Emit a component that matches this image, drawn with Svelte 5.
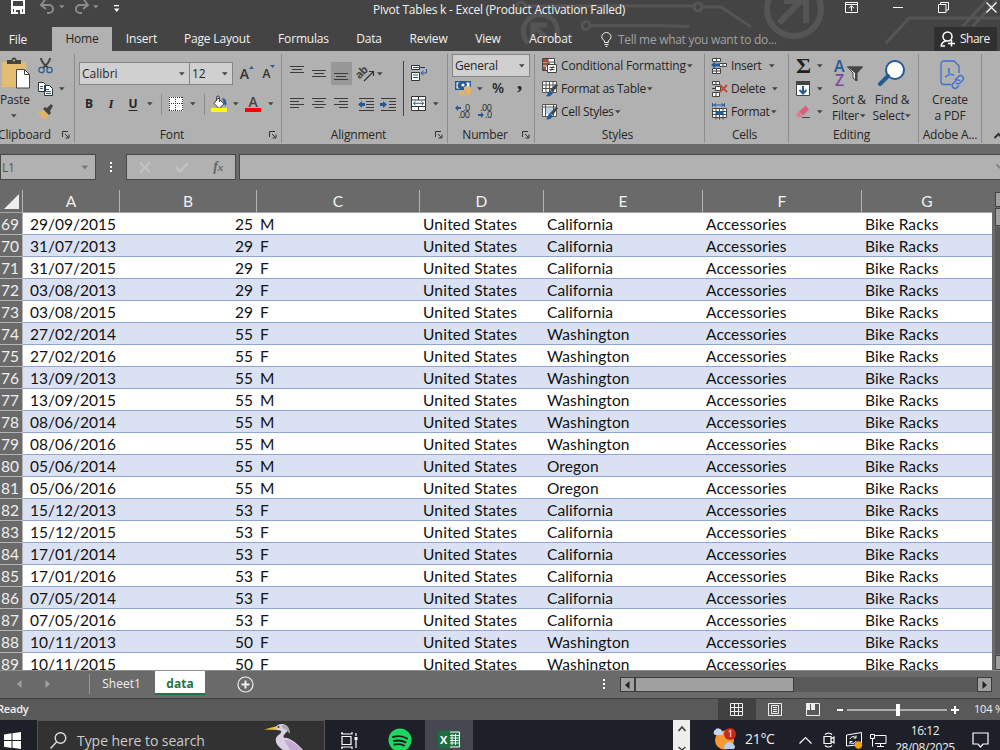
<script>
  const rows = [
    [69, '29/09/2015', 25, 'M', 'California'],
    [70, '31/07/2013', 29, 'F', 'California'],
    [71, '31/07/2015', 29, 'F', 'California'],
    [72, '03/08/2013', 29, 'F', 'California'],
    [73, '03/08/2015', 29, 'F', 'California'],
    [74, '27/02/2014', 55, 'F', 'Washington'],
    [75, '27/02/2016', 55, 'F', 'Washington'],
    [76, '13/09/2013', 55, 'M', 'Washington'],
    [77, '13/09/2015', 55, 'M', 'Washington'],
    [78, '08/06/2014', 55, 'M', 'Washington'],
    [79, '08/06/2016', 55, 'M', 'Washington'],
    [80, '05/06/2014', 55, 'M', 'Oregon'],
    [81, '05/06/2016', 55, 'M', 'Oregon'],
    [82, '15/12/2013', 53, 'F', 'California'],
    [83, '15/12/2015', 53, 'F', 'California'],
    [84, '17/01/2014', 53, 'F', 'California'],
    [85, '17/01/2016', 53, 'F', 'California'],
    [86, '07/05/2014', 53, 'F', 'California'],
    [87, '07/05/2016', 53, 'F', 'California'],
    [88, '10/11/2013', 50, 'F', 'Washington'],
    [89, '10/11/2015', 50, 'F', 'Washington']
  ];
  const columns = ['A', 'B', 'C', 'D', 'E', 'F', 'G'];
</script>

{#snippet caret()}<svg class="caret" width="6" height="4" viewBox="0 0 6 4"><path d="M0 .3h5.6L2.8 3.5z" fill="currentColor" /></svg>{/snippet}

{#snippet launcher()}<svg class="launcher" width="8" height="8" viewBox="0 0 8 8" fill="none" stroke="#333"><path d="M.5 6V.5H6M3 3l3.500 3.500M7 3.500V7H3.500" /></svg>{/snippet}

{#snippet lines(a, b)}<svg width="14" height="12" viewBox="0 0 14 12" stroke="#3b3b3b"><path d={a} /><path d={b} /></svg>{/snippet}

<div class="window">
  <header>
    <svg class="decor" width="1000" height="51" viewBox="0 0 1000 51" fill="none" stroke="#555" stroke-width="3">
      <path d="M528 43a17 17 0 1 1 27-3" stroke-width="5" /><path d="M548 40l-14-14M533 38V25h14" stroke-width="5" />
      <circle cx="586" cy="25.500" r="4" /><path d="M591 25.500h70l28 1" />
      <circle cx="521" cy="6" r="4" /><path d="M526 6h167M703 7h18l30 20" /><circle cx="698" cy="7" r="4" />
      <circle cx="794" cy="9" r="27" stroke-width="6" /><path d="M779 23l24-24M784 1h22v22" stroke-width="6" />
      <path d="M886 43l23-25h91M963 26l24-26M973 26l24-26" />
    </svg>
    <div class="titlebar">
      <div class="quick">
        <svg width="14" height="15" viewBox="0 0 14 15"><path d="M1 0h12v13H1z" fill="none" stroke="#fff" stroke-width="2" /><path d="M1 6h12v3H1zM3 9h8v5H3z" fill="#fff" /><path d="M5 10h4v4H7v-2H5z" fill="#444" /></svg>
        <svg width="15" height="14" viewBox="0 0 15 14" fill="none" stroke="#8b8b8b" stroke-width="2"><path d="M1 5h8a4 4 0 0 1 0 8H7M5 0L1 5l5 4" /></svg>
        <span class="dim">{@render caret()}</span>
        <svg width="15" height="14" viewBox="0 0 15 14" fill="none" stroke="#8b8b8b" stroke-width="2"><path d="M14 5H6a4 4 0 0 0 0 8h2M10 0l4 5-5 4" /></svg>
        <span class="dim">{@render caret()}</span>
        <svg width="6" height="8" viewBox="0 0 6 8" fill="#fff"><path d="M0 0h5v1.200H0zM0 3.500h5.500L2.700 7z" /></svg>
      </div>
      <div class="title">Pivot Tables k - Excel (Product Activation Failed)</div>
      <div class="controls">
        <svg width="13" height="11" viewBox="0 0 13 11" fill="none" stroke="#fff"><path d="M.5.5h12v10H.5zM.5 2.500h12M6.500 9V4M4 6.200l2.500-2.400L9 6.200" /></svg>
        <svg width="10" height="10" viewBox="0 0 10 10" stroke="#fff"><path d="M0 5.500h10" /></svg>
        <svg width="11" height="11" viewBox="0 0 11 11" fill="none" stroke="#fff"><path d="M.5 2.500h7.500v8H.5zM2.500 2.500V.5h8v7.500H8" /></svg>
        <svg width="11" height="11" viewBox="0 0 11 11" stroke="#fff" stroke-width="1.200"><path d="M.5.5l10 10M10.500.5l-10 10" /></svg>
      </div>
    </div>
    <nav>
      <span>File</span><span class="active">Home</span><span>Insert</span><span>Page Layout</span><span>Formulas</span><span>Data</span><span>Review</span><span>View</span><span>Acrobat</span>
      <div class="tell">
        <svg width="11" height="15" viewBox="0 0 11 15" fill="none" stroke="#eee"><path d="M3.500 10.500V9C2 7.500.8 6.500.8 4.800a4.600 4.300 0 0 1 9.200 0c0 1.700-1.200 2.700-2.700 4.200v1.500zM3.500 12.500h4M4.500 14.500h2" /></svg>
        <p>Tell me what you want to do...</p>
      </div>
      <div class="share"><svg width="16" height="16" viewBox="0 0 16 16" fill="none" stroke="#fff" stroke-width="1.500"><circle cx="7.500" cy="5.500" r="4.500" /><path d="M1 15.500c.5-3.500 2-5 5-5.500M1 15h4M11.500 9v6.500M8 12.500h7" /></svg><span>Share</span></div>
    </nav>
  </header>

  <section class="ribbon">
    <div class="group clipboard">
      <div class="body">
        <div class="paste">
          <svg width="31" height="32" viewBox="0 0 31 32"><path d="M2 4h24v25H2z" fill="#e4bd70" /><path d="M7 2h4.500a2.500 2.500 0 0 1 5 0H21v4H7z" fill="#444" /><circle cx="14" cy="2.500" r="1" fill="#e4bd70" /><path d="M16.500 11.500h8l5 5v13.500h-13z" fill="#fff" stroke="#444" /><path d="M24.500 11.500v5h5" fill="none" stroke="#444" /></svg>
          <p>Paste</p>{@render caret()}
        </div>
        <div class="stack">
          <div><svg width="15" height="16" viewBox="0 0 15 16" fill="none"><path d="M3 0c0 4 3 6 7 10M12 0c0 4-3 6-7 10" stroke="#444" stroke-width="2" /><circle cx="3.500" cy="12" r="2.700" stroke="#2e6092" stroke-width="1.300" /><circle cx="11.500" cy="12" r="2.700" stroke="#2e6092" stroke-width="1.300" /></svg></div>
          <div><svg width="16" height="14" viewBox="0 0 16 14" fill="#fff" stroke="#333"><path d="M.5.5h5l2 2v7h-7zM6.500 3.500h5l3 3v7h-8z" /><path d="M2 4.500h3M2 6.500h3M8 7.500h3M8 9.500h5M8 11.500h5" stroke="#2e6092" /></svg>{@render caret()}</div>
          <div><svg width="16" height="16" viewBox="0 0 16 16"><path d="M6 6l5 5-4 5C4 14 2 11 0 9z" fill="#e0b46a" /><path d="M5 5l2-2 2 1 4-4 2 2-3 5 1 2-2 2z" fill="#444" /></svg></div>
        </div>
      </div>
      <footer><span>Clipboard</span>{@render launcher()}</footer>
    </div>

    <div class="group font">
      <div class="body two">
        <div class="row combos">
          <div class="combo">Calibri{@render caret()}</div><div class="combo">12{@render caret()}</div>
          <div class="grow"><b>A</b><svg width="5" height="3" viewBox="0 0 5 3"><path d="M0 3h5L2.500 0z" fill="#2e6092" /></svg></div>
          <div class="grow small"><b>A</b><svg width="5" height="3" viewBox="0 0 5 3"><path d="M0 0h5L2.500 3z" fill="#2e6092" /></svg></div>
        </div>
        <div class="row marks">
          <b>B</b><b><i class="it">I</i></b><b class="un">U</b>{@render caret()}<hr />
          <svg width="14" height="14" viewBox="0 0 14 14"><path d="M0 0h14v14H0z" fill="#fff" /><path d="M0 .5h14M0 6.500h14M.5 0v14M6.500 0v14M13.500 0v14" fill="none" stroke="#333" stroke-dasharray="1 1" /><path d="M0 13.500h14" stroke="#333" stroke-dasharray="1 1" /></svg>
          {@render caret()}<hr />
          <svg width="17" height="16" viewBox="0 0 17 16"><path d="M7 2l6 6-5 4.500-5-5z" fill="#fff" stroke="#444" /><path d="M5.500 5V1.500a1.500 1.500 0 0 1 3 0V6" fill="none" stroke="#444" /><path d="M11 2c4 0 5 4 4 8l-2-2z" fill="#2e6092" /><path d="M0 12h16v4H0z" fill="#ff0" /></svg>
          {@render caret()}
          <svg class="color" width="17" height="16" viewBox="0 0 17 16"><text x="3.500" y="11" fill="#444">A</text><path d="M0 12h16v4H0z" fill="#f00" /></svg>
          {@render caret()}
        </div>
      </div>
      <footer><span>Font</span>{@render launcher()}</footer>
    </div>

    <div class="group alignment">
      <div class="body two">
        <div class="row aligns">
          <span class="up">{@render lines('M0 .5h14M0 6.500h14', 'M2 3.500h10')}</span>
          <span>{@render lines('M0 2.500h14M0 8.500h14', 'M2 5.500h10')}</span>
          <span class="sel">{@render lines('M0 5.500h14M0 11.500h14', 'M2 8.500h10')}</span>
          <svg class="turn" width="17" height="16" viewBox="0 0 17 16"><text transform="rotate(-45 6 9)" x="-.5" y="9" font-size="11" font-weight="bold" fill="#444">ab</text><path d="M6 15L15 6M11 5.500h4.500V10" fill="none" stroke="#333" stroke-width="1.200" /></svg>
          {@render caret()}
        </div>
        <div class="row aligns">
          <span>{@render lines('M0 .5h14M0 6.500h14', 'M0 3.500h9M0 9.500h9')}</span>
          <span>{@render lines('M0 .5h14M0 6.500h14', 'M2.500 3.500h9M2.500 9.500h9')}</span>
          <span>{@render lines('M0 .5h14M0 6.500h14', 'M5 3.500h9M5 9.500h9')}</span>
          <svg width="17" height="13" viewBox="0 0 17 13"><path d="M1 .5h15M8 3.500h8M8 6.500h8M8 9.500h8M1 12.500h15" stroke="#3b3b3b" /><path d="M0 6.500l4-3.500v2h3v3H4v2z" fill="#245a94" /></svg>
          <svg width="17" height="13" viewBox="0 0 17 13"><path d="M1 .5h15M9 3.500h7M9 6.500h7M9 9.500h7M1 12.500h15" stroke="#3b3b3b" /><path d="M7 6.500L3 3v2H0v3h3v2z" fill="#245a94" /></svg>
        </div>
      </div>
      <div class="wrap">
        <svg width="17" height="16" viewBox="0 0 17 16" fill="#fff" stroke="#333"><path d="M.5.500h8v4h-8zM.5 7.500h8v8h-8zM10 2.500h4" /><path d="M2 2.500h8M2 10h5M2 12.500h5M15.500 4v4h-5M12.500 6l-2.500 2 2.500 2" stroke="#245a94" fill="none" /></svg>
        <div><svg width="15" height="15" viewBox="0 0 15 15" fill="#fff" stroke="#333"><path d="M.5.5h14v14H.5zM.5 4h14M.5 10.500h14M7.500.5V4M7.500 10.500v4" /><path d="M2.500 7.300h10M4.500 5.300l-2 2 2 2M10.500 5.300l2 2-2 2" fill="none" stroke="#245a94" /></svg>{@render caret()}</div>
      </div>
      <footer><span>Alignment</span>{@render launcher()}</footer>
    </div>

    <div class="group number">
      <div class="body">
        <div class="combo">General{@render caret()}</div>
        <div class="row money">
          <svg width="17" height="16" viewBox="0 0 17 16"><path d="M0 1h16v9H0z" fill="#245a94" /><path d="M1.500 2.500h4a3 3 0 0 0 0 6h-4zM14.500 2.500h-4a3 3 0 0 1 1 4h3z" fill="#fff" /><circle cx="8" cy="5" r="1.600" fill="#fff" /><ellipse cx="12.500" cy="8" rx="3.500" ry="2" fill="#e4bd70" /><path d="M9 8v5c1 2 6 2 7 0V8zM4 11h7v4c-2 1-6 1-7 0z" fill="#e0b46a" /></svg>
          {@render caret()}<strong>%</strong><em>,</em>
        </div>
        <div class="row decimals">
          <svg width="16" height="15" viewBox="0 0 16 15"><path d="M0 4l3-3v2h3v2H3v2z" fill="#245a94" /><text x="8" y="6.500">.0</text><text x="3" y="14">.00</text></svg>
          <svg width="16" height="15" viewBox="0 0 16 15"><path d="M7 11L4 8v2H1v2h3v2z" fill="#245a94" /><text x="3" y="6.500">.00</text><text x="8" y="14">.0</text></svg>
        </div>
      </div>
      <footer><span>Number</span>{@render launcher()}</footer>
    </div>

    <div class="group styles">
      <div class="body list">
        <div><svg width="17" height="17" viewBox="0 0 17 17" fill="#fff" stroke="#444"><path d="M1.500 1.500h12v12h-12zM1.500 5h12M1.500 9h12M7 1.500v12" /><path d="M2 2h5v3H2zM2 6h7v2H2zM2 10h3v3H2z" fill="#b5452c" stroke="none" /><path d="M6.500 7.500h9v8h-9z" /><path d="M8.500 10.500h5M8.500 12.500h5M12.500 9l-3 5" /></svg><span>Conditional Formatting</span>{@render caret()}</div>
        <div><svg width="17" height="16" viewBox="0 0 17 16" fill="#fff" stroke="#555"><path d="M1.500.5h14v11h-14zM1.500 4h14M1.500 7.500h14M5 .5v11M8.500.5v11M12 .5v11" /><path d="M15 3l2 1-5 7-3-2z" fill="#444" stroke="none" /><path d="M9 9l3 3c-2 3-4 4-7 3 2-1 2-5 4-6z" fill="#245a94" stroke="none" /></svg><span>Format as Table</span>{@render caret()}</div>
        <div><svg width="17" height="16" viewBox="0 0 17 16" fill="#fff" stroke="#555"><path d="M1.500.5h14v12h-14zM1.500 3h14M4.500.5v12M12.500.5v12" /><path d="M5 4h7v6H5z" fill="#b7d0e8" stroke="none" /><path d="M15 3l2 1-5 7-3-2z" fill="#444" stroke="none" /><path d="M9 9l3 3c-2 3-4 4-7 3 2-1 2-5 4-6z" fill="#245a94" stroke="none" /></svg><span>Cell Styles</span>{@render caret()}</div>
      </div>
      <footer><span>Styles</span></footer>
    </div>

    <div class="group cells">
      <div class="body list">
        <div><svg width="17" height="16" viewBox="0 0 17 16" fill="#fff" stroke="#444"><path d="M1.500.5h8v3h-8zM5.500.5v3M1.500 10.500h8v5h-8zM1.500 13h8M5.500 10.500v5M8.500 5.500h7v3h-7zM12 5.500v3" /><path d="M0 7l4-3.500v2h4v3H4v2z" fill="#245a94" stroke="none" /></svg><span>Insert</span><s></s>{@render caret()}</div>
        <div><svg width="17" height="16" viewBox="0 0 17 16" fill="#fff" stroke="#444"><path d="M1.500.5h7v3h-7zM5 .5v3M4.500 5.500h5v4h-5zM1.500 11.500h7v4h-7zM5 11.500v4M1 7.500h3" /><path d="M9 4l7 7M16 4l-7 7" stroke="#c14c2e" stroke-width="1.800" /></svg><span>Delete</span><s></s>{@render caret()}</div>
        <div><svg width="17" height="17" viewBox="0 0 17 17" fill="#fff" stroke="#444"><path d="M1.500 5.500h14v9h-14zM1.500 8.500h14M1.500 11.500h14M5 5.500v11M12 5.500v11M8.500 5.500v11" /><path d="M5 8h7v4H5z" fill="#245a94" stroke="none" /><path d="M1.500 0v4M13.500 0v4M2 2h11M5 .5L3 2l2 1.500M10.500.5l2 1.500-2 1.500" stroke="#245a94" fill="none" /></svg><span>Format</span>{@render caret()}</div>
      </div>
      <footer><span>Cells</span></footer>
    </div>

    <div class="group editing">
      <div class="body">
        <div class="stack">
          <div><svg class="sum" width="15" height="15" viewBox="0 0 15 15"><text x="0" y="15" textLength="15" lengthAdjust="spacingAndGlyphs">Σ</text></svg>{@render caret()}</div>
          <div><svg width="15" height="15" viewBox="0 0 15 15"><path d="M.5.5h13v14H.5z" fill="#fff" stroke="#444" /><path d="M0 0h14v4H0z" fill="#444" /><path d="M7 5v7M3.500 9L7 12.500 10.500 9" fill="none" stroke="#245a94" stroke-width="2" /></svg>{@render caret()}</div>
          <div><svg width="15" height="13" viewBox="0 0 15 13"><path d="M3 6.500L9.500.5 13 4.500l-6 6z" fill="#d9607a" /><path d="M0 9.500l3-2.500 3 4-1.500 1.500H2z" fill="#e0788e" /><path d="M6 12.500h8" stroke="#444" /></svg>{@render caret()}</div>
        </div>
        <div class="big sort">
          <svg width="30" height="30" viewBox="0 0 30 30" fill="none"><text x="0" y="12.500" fill="#245a94">A</text><text x="1" y="27" fill="#7d489d">Z</text><path d="M13.500 8h15l-5.500 6v8l-4-3v-5z" fill="#f0f0f0" stroke="#444" /><path d="M13 7.500h16L23 14v7l-2 1v-8z" fill="#444" /></svg>
          <p>Sort &amp;</p><p>Filter {@render caret()}</p>
        </div>
        <div class="big find">
          <svg width="30" height="30" viewBox="0 0 30 30"><circle cx="18" cy="11" r="9" fill="#fff" stroke="#245a94" stroke-width="2" /><path d="M11 17l-8 8" stroke="#245a94" stroke-width="4" stroke-linecap="round" /></svg>
          <p>Find &amp;</p><p>Select {@render caret()}</p>
        </div>
      </div>
      <footer><span>Editing</span></footer>
    </div>

    <div class="group adobe">
      <div class="body">
        <div class="big">
          <svg width="28" height="30" viewBox="0 0 28 30" fill="none" stroke="#3a6fd0" stroke-width="1.300"><path d="M15 25.500H8A3 3 0 0 1 5 22.500V5a3 3 0 0 1 3-3h10l5 5v7" /><path d="M9 18c3-1 5-5 4-9-2 3 1 7 5 7-3-1-6 0-9 2z" stroke-width="1" /><path d="M19 21l3.500-3.500a2.800 2.800 0 0 1 4 4l-2.500 2.500a2.800 2.800 0 0 1-4 0M24 22a2.800 2.800 0 0 0-4.500 0L17 24.500a2.800 2.800 0 0 0 4 4l2-2" /></svg>
          <p>Create</p><p>a PDF</p>
        </div>
      </div>
      <footer><span>Adobe A...</span></footer>
    </div>
    <div class="collapse"><svg width="9" height="6" viewBox="0 0 9 6"><path d="M.5 5l4-4 4 4" fill="none" stroke="#333" stroke-width="2" /></svg></div>
  </section>

  <section class="formula">
    <div class="name">L1{@render caret()}</div>
    <div class="dots"><i></i><i></i><i></i></div>
    <div class="fx">
      <svg width="12" height="11" viewBox="0 0 12 11"><path d="M1 .5l10 10M11 .5l-10 10" stroke="#c3c3c3" stroke-width="1.800" /></svg>
      <svg width="14" height="11" viewBox="0 0 14 11"><path d="M1 5.500l4 4L13 1" fill="none" stroke="#c3c3c3" stroke-width="2.500" /></svg>
      <span>f<small>x</small></span>
    </div>
    <div class="input"><svg width="8" height="6" viewBox="0 0 8 6"><path d="M.5.5l4 4 4-4" fill="none" stroke="#777" stroke-width="1.500" /></svg></div>
  </section>

  <section class="sheet">
    <div class="table">
      <div class="r head">
        <span class="corner"><svg width="15" height="15" viewBox="0 0 15 15"><path d="M15 0v15H0z" fill="#eee" /></svg></span>
        {#each columns as c}<span>{c}</span>{/each}
      </div>
      <div class="data">
        {#each rows as [n, date, age, sex, state]}
          <div class="r" class:band={n % 2 === 0}>
            <span>{n}</span><span class="date">{date}</span><span class="age">{age}</span><span>{sex}</span><span class="wide">United States</span><span>{state}</span><span>Accessories</span><span>Bike Racks</span>
          </div>
        {/each}
      </div>
    </div>
    <div class="vscroll"><div class="box"></div><div class="box thumb"></div><div class="track"></div><div class="box"></div></div>
  </section>

  <section class="tabs">
    <div class="arrows"><svg width="5" height="8" viewBox="0 0 5 8"><path d="M4.500 0v8L0 4z" fill="#a0a0a0" /></svg><svg width="5" height="8" viewBox="0 0 5 8"><path d="M.5 0v8L5 4z" fill="#a0a0a0" /></svg></div>
    <div class="tab">Sheet1</div><div class="tab on">data</div>
    <svg class="add" width="17" height="17" viewBox="0 0 17 17" fill="none" stroke="#eee"><circle cx="8.500" cy="8.500" r="7.500" stroke-width="1.200" /><path d="M4.500 8.500h8M8.500 4.500v8" stroke-width="2" /></svg>
    <div class="dots"><i></i><i></i><i></i></div>
    <div class="hscroll">
      <div class="end"><svg width="5" height="8" viewBox="0 0 5 8"><path d="M4.500 0v8L0 4z" fill="#222" /></svg></div>
      <div class="bar"></div><div class="rest"></div>
      <div class="end"><svg width="5" height="8" viewBox="0 0 5 8"><path d="M.5 0v8L5 4z" fill="#222" /></svg></div>
    </div>
  </section>

  <section class="status">
    <span class="ready">Ready</span>
    <div class="view on"><svg width="14" height="13" viewBox="0 0 14 13" fill="none" stroke="#eee"><path d="M.5.5h12v12H.5zM.5 4.500h12M.5 8.500h12M4.500.5v12M8.500.5v12" /></svg></div>
    <div class="view"><svg width="14" height="13" viewBox="0 0 14 13" fill="none" stroke="#eee"><path d="M.5.5h13v12H.5zM3.500 2.500h7v8h-7zM5 4.500h4M5 6.500h4M5 8.500h4" /></svg></div>
    <div class="view"><svg width="14" height="13" viewBox="0 0 14 13"><path d="M.5.5h13v12H.5z" fill="none" stroke="#eee" /><path d="M0 0h4v7H0zM5 0h4v7H5z" fill="#eee" /></svg></div>
    <svg class="zoom" width="122" height="12" viewBox="0 0 122 12" fill="#fff"><path d="M0 5h6v2H0zM10 5.500h100v1H10zM59 0h4v12h-4zM114 5h8v2h-8zM117 2h2v8h-2z" /></svg>
    <span class="percent">104 %</span>
  </section>

  <section class="taskbar">
    <div class="start"><svg width="17" height="17" viewBox="0 0 17 17" fill="#fff"><path d="M0 2.500L7.500 1.300v6.700H0zM8.500 1.200L17 0v8H8.500zM0 9h7.500v7L0 14.800zM8.500 9H17v8l-8.500-1.200z" /></svg></div>
    <div class="search">
      <svg width="17" height="17" viewBox="0 0 17 17" fill="none" stroke="#ddd" stroke-width="1.400"><circle cx="10.500" cy="6" r="5.300" /><path d="M6.500 10L.5 16.500" /></svg>
      <span>Type here to search</span>
      <svg class="bird" width="44" height="27" viewBox="0 0 44 27"><path d="M0 6.500L13 3l1 4z" fill="#e8c12f" /><path d="M12 4c3-5 12-3 12 2 0 4-6 5-4 9 4-1 12 4 19 12H19c-6-4-8-8-7-12 2-4 6-4 5-7-1-1-3 0-5-2z" fill="#d9d0e2" /><path d="M18 2c5-1 8 3 8 9-2-3-5-5-8-6" fill="#a8a9b9" /><path d="M20 17c8 0 13 5 18 10H26z" fill="#c2acd4" /><circle cx="14.500" cy="4" r="1" fill="#333" /></svg>
    </div>
    <div class="app"><svg width="18" height="17" viewBox="0 0 18 17" fill="none" stroke="#fff" stroke-width="1.200"><path d="M1 4.500h9v8H1zM0 1.500h2M0 15.500h2M1 0v2h10V0M1 17v-2h10v2M15 1v3M15 8v8" /><path d="M13.500 5h3v3h-3z" fill="#fff" stroke="none" /></svg></div>
    <div class="app spot"><svg width="24" height="24" viewBox="0 0 24 24"><circle cx="12" cy="12" r="11.500" fill="#1ed760" /><path d="M5 9c5-1.500 10-1 14 1.500M6 13c4-1 8-.6 11.500 1.300M6.500 16.500c3.500-.8 6.500-.4 9.500 1" fill="none" stroke="#182018" stroke-width="1.900" stroke-linecap="round" /></svg></div>
    <div class="app on"><svg width="22" height="19" viewBox="0 0 22 19"><path d="M11 2h10.500v15H11z" fill="#217346" stroke="#fff" /><path d="M14 4v11M17.500 4v11M12 5.500h9M12 8h9M12 10.500h9M12 13h9" stroke="#fff" stroke-width=".9" /><path d="M0 1.500L12 0v19L0 17.500z" fill="#1d6f42" /><text x="2" y="13.500" fill="#fff">X</text></svg></div>
    <div class="lift"><svg width="8" height="6" viewBox="0 0 8 6"><path d="M.5 5L4 1l3.500 4" fill="none" stroke="#444" stroke-width="1.800" /></svg><svg width="8" height="3" viewBox="0 0 8 3"><path d="M.5 0L4 3l3.500-3" fill="none" stroke="#444" stroke-width="1.500" /></svg></div>
    <svg class="weather" width="26" height="23" viewBox="0 0 26 23"><circle cx="12.500" cy="12" r="9.500" fill="#f59a31" /><path d="M3 7a3 3 0 0 1 0-5 4 4 0 0 1 7 1 2.500 2.500 0 0 1 0 4z" fill="#c6d5f1" /><path d="M13 21a3 3 0 0 1 1-5 4 4 0 0 1 7 0 3 3 0 0 1 1 5z" fill="#b9cff2" /><circle cx="18" cy="6" r="6" fill="#c42b1c" /><text x="15.800" y="9.300" font-size="9" fill="#fff">1</text></svg>
    <span class="temp">21°C</span>
    <div class="tray">
      <svg width="13" height="8" viewBox="0 0 13 8"><path d="M.5 7.500l6-6 6 6" fill="none" stroke="#fff" stroke-width="1.200" /></svg>
      <svg width="12" height="16" viewBox="0 0 12 16" fill="none" stroke="#fff" stroke-width="1.200"><path d="M1 4.500h7v7H1zM8 7l3-2v6L8 9M2 2.500c2-2 5-2 7 0M2 13.500c2 2 5 2 7 0" /></svg>
      <svg width="17" height="17" viewBox="0 0 17 17"><path d="M.5 3L15.500.5v12L.5 14z" fill="none" stroke="#fff" /><path d="M4 7c1-3 5-3 6-1M10 3.500V6H7.500M10 9c-1 3-5 3-6 1M4 12V9.500h2.500" fill="none" stroke="#fff" /><circle cx="12.500" cy="13" r="3.700" fill="#f59c12" /></svg>
      <svg width="17" height="15" viewBox="0 0 17 15" fill="none" stroke="#fff"><path d="M5 2.500h11v8H5M10.500 10.500v3M7 13.500h7M.5 1.500h4v4h-4zM2.500 5.500v8" /></svg>
    </div>
    <div class="clock"><p>16:12</p><p>28/08/2025</p></div>
    <svg class="note" width="17" height="17" viewBox="0 0 17 17" fill="none" stroke="#fff" stroke-width="1.200"><path d="M1 1h15v11h-5l-2.500 3L6 12H1z" /></svg>
  </section>
</div>

<style>
  :global(body) { margin: 0; overflow: hidden; }
  * { box-sizing: border-box; }
  p { margin: 0; white-space: nowrap; }
  svg { flex: none; display: block; overflow: visible; }
  .window { width: 1000px; height: 750px; overflow: hidden; display: flex; flex-direction: column; background: #6a6a6a; font: 12px/16px "Open Sans", "Noto Sans", sans-serif; letter-spacing: -.18px; color: #262626; }
  .window > * { flex: none; }
  header { position: relative; height: 51px; background: #444; color: #f2f2f2; overflow: hidden; }
  .decor { position: absolute; inset: 0; }
  .titlebar { position: relative; height: 27px; display: grid; grid-template-columns: 373px 439px 188px; }
  .quick { display: flex; align-items: flex-start; padding-left: 11px; height: 15px; overflow: hidden; }
  .quick > svg:nth-child(2) { margin-left: 15px; }
  .quick .dim { margin: 5px 0 0 4px; line-height: 4px; }
  .quick .dim :global(.caret) { color: #8b8b8b; display: block; }
  .quick > svg:nth-child(4) { margin-left: 9px; }
  .quick > svg:last-child { margin: 5px 0 0 15px; }
  .title { padding-top: 2px; letter-spacing: -.23px; white-space: nowrap; }
  .controls { display: grid; grid-template-columns: 78px 15px 77px 18px; align-items: start; justify-items: center; padding-top: 2px; }
  nav { position: relative; height: 24px; display: grid; grid-template-columns: 52px 60px 59px 92px 81px 50px 69px 50px 75px 334px 78px; line-height: 24px; text-align: center; white-space: nowrap; }
  nav > span:first-child { padding: 1px 16px 0 0; }
  nav .active { background: #b1b1b1; color: #262626; }
  .tell { display: flex; align-items: center; gap: 6px; padding-left: 13px; color: #a2a2a2; letter-spacing: -.29px; }
  .share { background: #303030; margin: 0 0 1px 12px; display: flex; align-items: center; gap: 4px; padding-left: 6px; width: 63px; letter-spacing: -.5px; }

  .ribbon { height: 93px; background: #b1b1b1; display: grid; grid-template-columns: 75px 207px 166px 87px 170px 84px 130px 63px 18px; }
  .group { height: 89px; margin-top: 3px; display: grid; grid-template-columns: 1fr; grid-template-rows: 73px 16px; border-right: 1px solid #8d8d8d; white-space: nowrap; }
  .caret { color: #444; display: inline-block; flex: none; }
  footer { display: flex; align-items: center; text-align: center; grid-column: 1 / -1; padding: 0 4px 0 0; height: 16px; }
  footer span { flex: 1; }
  .body { min-width: 0; }
  .row { display: grid; align-items: center; justify-items: center; }
  .clipboard .body { display: flex; }
  .clipboard footer span { text-align: left; margin-left: -2px; }
  .paste { width: 37px; padding-top: 4px; }
  .paste p { margin: 2px 0 6px; }
  .paste > :global(.caret) { margin-left: 11px; display: block; }
  .stack div { height: 23px; display: flex; align-items: center; }
  .stack div > :global(.caret) { margin-left: 6px; }
  .clipboard .stack { padding-left: 1px; }
  .clipboard .stack div > :global(.caret) { margin-left: 5px; }
  .two { display: grid; grid-template-rows: 27px 34px; padding-top: 6px; }
  .combos { grid-template-columns: 111px 43px 24px 22px; padding-left: 4px; }
  .combo { display: flex; align-items: center; justify-content: space-between; width: 100%; height: 23px; border: 1px solid #858585; background: #d0d0d0; padding: 0 4px 0 2px; }
  .combos .combo { letter-spacing: 0; }
  .combos .combo + .combo { width: 44px; margin-left: -1px; }
  .grow { display: flex; align-items: flex-start; margin-left: 4px; }
  .grow b { font-size: 14px; font-weight: 600; color: #333; letter-spacing: 0; }
  .grow.small { margin-left: 2px; }
  .grow.small b { font-size: 12px; padding-top: 1px; }
  .marks { grid-template-columns: 22px 22px 22px 13px 8px 23px 10px 12px 20px 12px 24px 10px; padding-left: 3px; }
  .marks > svg { margin-left: -1px; }
  .marks .it { font-family: "Liberation Serif", serif; font-size: 13px; }
  .color text { font: 600 14px "Open Sans", sans-serif; }
  .un { text-decoration: underline; text-underline-offset: 2px; }
  hr { width: 1px; height: 21px; border: 0; background: #8d8d8d; margin: 0; }
  .alignment { grid-template-columns: 121px 1fr; }
  .aligns { grid-template-columns: 22px 22px 22px 28px 16px; padding-left: 4px; }
  .aligns > :global(.caret) { justify-self: start; margin-left: -3px; }
  .aligns span { width: 21px; height: 23px; display: flex; align-items: center; justify-content: center; }
  .aligns .up { padding-bottom: 3px; }
  .aligns .sel { background: #989898; }
  .turn text { font-family: "Open Sans", sans-serif; letter-spacing: -.6px; }
  .wrap { margin-top: 7px; height: 55px; border-left: 1px solid #444; padding: 4px 0 0 7px; display: flex; flex-direction: column; gap: 15px; }
  .wrap div { display: flex; align-items: center; gap: 7px; }
  .number .combo { width: 78px; height: 23px; margin-left: 4px; }
  .number .body { display: grid; grid-template-rows: 23px 23px 23px; }
  .money { grid-template-columns: 24px 13px 20px 23px; padding-left: 3px; }
  .money > svg { margin-top: -2px; }
  .money > :global(.caret) { margin-left: -3px; margin-top: 0; }
  .money strong { font-size: 14px; font-weight: 600; margin-top: -1px; }
  .money em { font: bold 21px/10px "Liberation Serif", serif; margin-top: -14px; }
  .decimals { grid-template-columns: 22px 22px; padding-left: 4px; }
  .decimals text { font: 9px "Open Sans", sans-serif; fill: #222; letter-spacing: -.4px; }
  .list { display: grid; grid-template-rows: 23px 23px 23px; padding-left: 7px; }
  .list div { display: flex; align-items: center; }
  .list span { margin: 0 2px; letter-spacing: -.3px; }
  .cells.group .list { padding-left: 6px; }
  .cells.group .list span { margin: 0 1px 0 3px; }
  .styles .list { padding-left: 6px; }
  .styles .list span { margin-left: 3px; margin-right: 1px; }
  .styles .list div:first-child span { letter-spacing: -.18px; }
  s { width: 6px; }
  .editing .body, .adobe .body { display: flex; }
  .editing .stack { padding-left: 7px; width: 38px; }
  .sum text { font: bold 22px "Liberation Serif", serif; fill: #222; letter-spacing: 0; }
  .big { width: 42px; display: flex; flex-direction: column; align-items: center; padding-top: 5px; }
  .big > svg { margin-bottom: 3px; }
  .big :global(.caret) { vertical-align: 2px; margin-left: -2px; }
  .big p + p { line-height: 16px; }
  .sort { width: 44px; }
  .sort text { font: 600 16px "Open Sans", sans-serif; }
  .adobe .big { width: 62px; }
  .adobe footer { padding: 0; }
  .collapse { padding: 82px 0 0 12px; overflow: hidden; }

  .formula { margin-top: 10px; height: 26px; display: grid; grid-template-columns: 96px 30px 110px 3px 761px; }
  .formula > div:not(.dots) { border: 1px solid #484848; background: #b1b1b1; display: flex; align-items: center; }
  .formula .name { border-left: 0; color: #555; justify-content: space-between; padding: 1px 6px 0 1px; }
  .formula .name > :global(.caret) { color: #777; width: 8px; height: 5px; }
  .dots { display: flex; flex-direction: column; align-items: center; justify-content: center; gap: 2px; }
  .dots i { width: 2px; height: 2px; background: #fff; }
  .formula .fx { justify-content: space-between; padding: 0 12px; }
  .fx span { font: italic bold 14px "Liberation Serif", serif; color: #666; }
  .fx small { font-size: 11px; }
  .formula > .input:not(.dots) { grid-column: 5; justify-content: flex-end; border-right: 0; overflow: hidden; }
  .input svg { margin-right: -4px; }

  .sheet { margin-top: 10px; height: 480px; display: grid; grid-template-columns: 992px 8px; overflow: hidden; }
  .table { height: 480px; overflow: hidden; font-family: Lato, sans-serif; font-size: 15.500px; letter-spacing: .1px; }
  .r { display: grid; grid-template-columns: 23px 97px 137px 163px 124px 159px 159px 130px; height: 22px; line-height: 22px; color: #111; background: #fff; border-bottom: 1px solid #8fa5d3; }
  .r span { padding-left: 3px; overflow: hidden; white-space: nowrap; }
  .r .date, .r .age { text-align: right; padding: 0 4px 0 0; letter-spacing: 0; }
  .r .wide { letter-spacing: .2px; }
  .r.band { background: #d9e1f2; }
  .data .r span:first-child { background: #6a6a6a; color: #eee; padding: 0 3px 0 0; text-align: right; border-right: 1px solid #b5b5b5; margin-bottom: -1px; border-bottom: 1px solid #b5b5b5; height: 22px; letter-spacing: 0; }
  .r.head { height: 23px; background: #6a6a6a; color: #f2f2f2; border-bottom-color: #a6a6a6; }
  .head span { text-align: center; padding: 0; border-right: 1px solid #b5b5b5; }
  .head span:last-child { border: 0; }
  .head .corner { padding: 4px 0 0 4px; }
  .vscroll { border-left: 1px solid #6a6a6a; padding: 2px 0 0 2px; display: flex; flex-direction: column; gap: 1px; }
  .vscroll .box { height: 15px; border: 1px solid #444; border-right: 0; background: #a0a0a0; }
  .vscroll .thumb { height: 18px; }
  .track { flex: 1; background: #595959; }

  .tabs { height: 28px; display: flex; border-top: 1px solid #8d8d8d; line-height: 26px; color: #f0f0f0; }
  .arrows { width: 90px; margin: 3px 0; height: 20px; border-right: 1px solid #999; display: flex; align-items: center; gap: 23px; padding-left: 17px; }
  .tab { width: 65px; padding-right: 2px; text-align: center; letter-spacing: 0; }
  .tab.on { width: 50px; padding: 0; height: 24px; background: #fff; color: #217346; font-weight: bold; border-bottom: 2px solid #217346; }
  .tabs .add { margin: 5px 0 0 32px; }
  .tabs .dots { margin-left: 348px; width: 4px; height: 26px; gap: 2px; }
  .hscroll { margin: 6px 0 0 14px; width: 372px; height: 15px; display: flex; background: #595959; }
  .end, .bar { border: 1px solid #3c3c3c; background: #a0a0a0; }
  .end { width: 15px; display: flex; align-items: center; justify-content: center; }
  .bar { width: 159px; }
  .rest { flex: 1; }

  .status { height: 22px; background: #595959; border-top: 1px solid #404040; display: flex; align-items: center; color: #f0f0f0; font-size: 11px; white-space: nowrap; overflow: hidden; }
  .ready { width: 721px; flex: none; margin: -2px 0 0 -3px; font-weight: 600; }
  .view { width: 38px; height: 21px; display: flex; align-items: center; justify-content: center; flex: none; }
  .view.on { background: #414141; }
  .zoom { margin: 0 15px 0 5px; }
  .percent { margin-top: -2px; }

  .taskbar { height: 30px; background: #1d2029; color: #eee; display: flex; overflow: hidden; }
  .taskbar > * { flex: none; }
  .start { width: 37px; padding: 12px 0 0 4px; }
  .search { width: 288px; height: 30px; background: #323232; border: 1px solid #555; border-bottom: 0; display: flex; padding: 11px 0 0 12px; }
  .search span { font-size: 14px; line-height: 17px; letter-spacing: -.05px; padding-left: 10px; color: #ccc; width: 197px; }
  .bird { margin-top: -9px; }
  .app { width: 52px; padding: 12px 0 0 16px; }
  .app.spot { width: 48px; padding: 8px 0 0 11px; }
  .app.on { width: 48px; background: #454751; padding: 10px 0 0 13px; }
  .app text { font: bold 11px "Open Sans", sans-serif; }
  .lift { width: 17px; margin-left: 200px; background: #eee; height: 30px; display: flex; flex-direction: column; align-items: center; justify-content: space-between; padding-top: 6px; }
  .weather { margin: 8px 0 0 22px; }
  .temp { font-size: 14px; letter-spacing: -.3px; padding: 11px 0 0 7px; width: 61px; }
  .tray { display: flex; align-items: center; gap: 11px; height: 40px; width: 96px; }
  .tray svg:last-child { margin-left: -4px; }
  .clock { width: 66px; margin-left: -3px; text-align: center; padding-top: 2px; line-height: 17px; letter-spacing: -.4px; }
  .note { margin: 12px 0 0 14px; }
</style>
